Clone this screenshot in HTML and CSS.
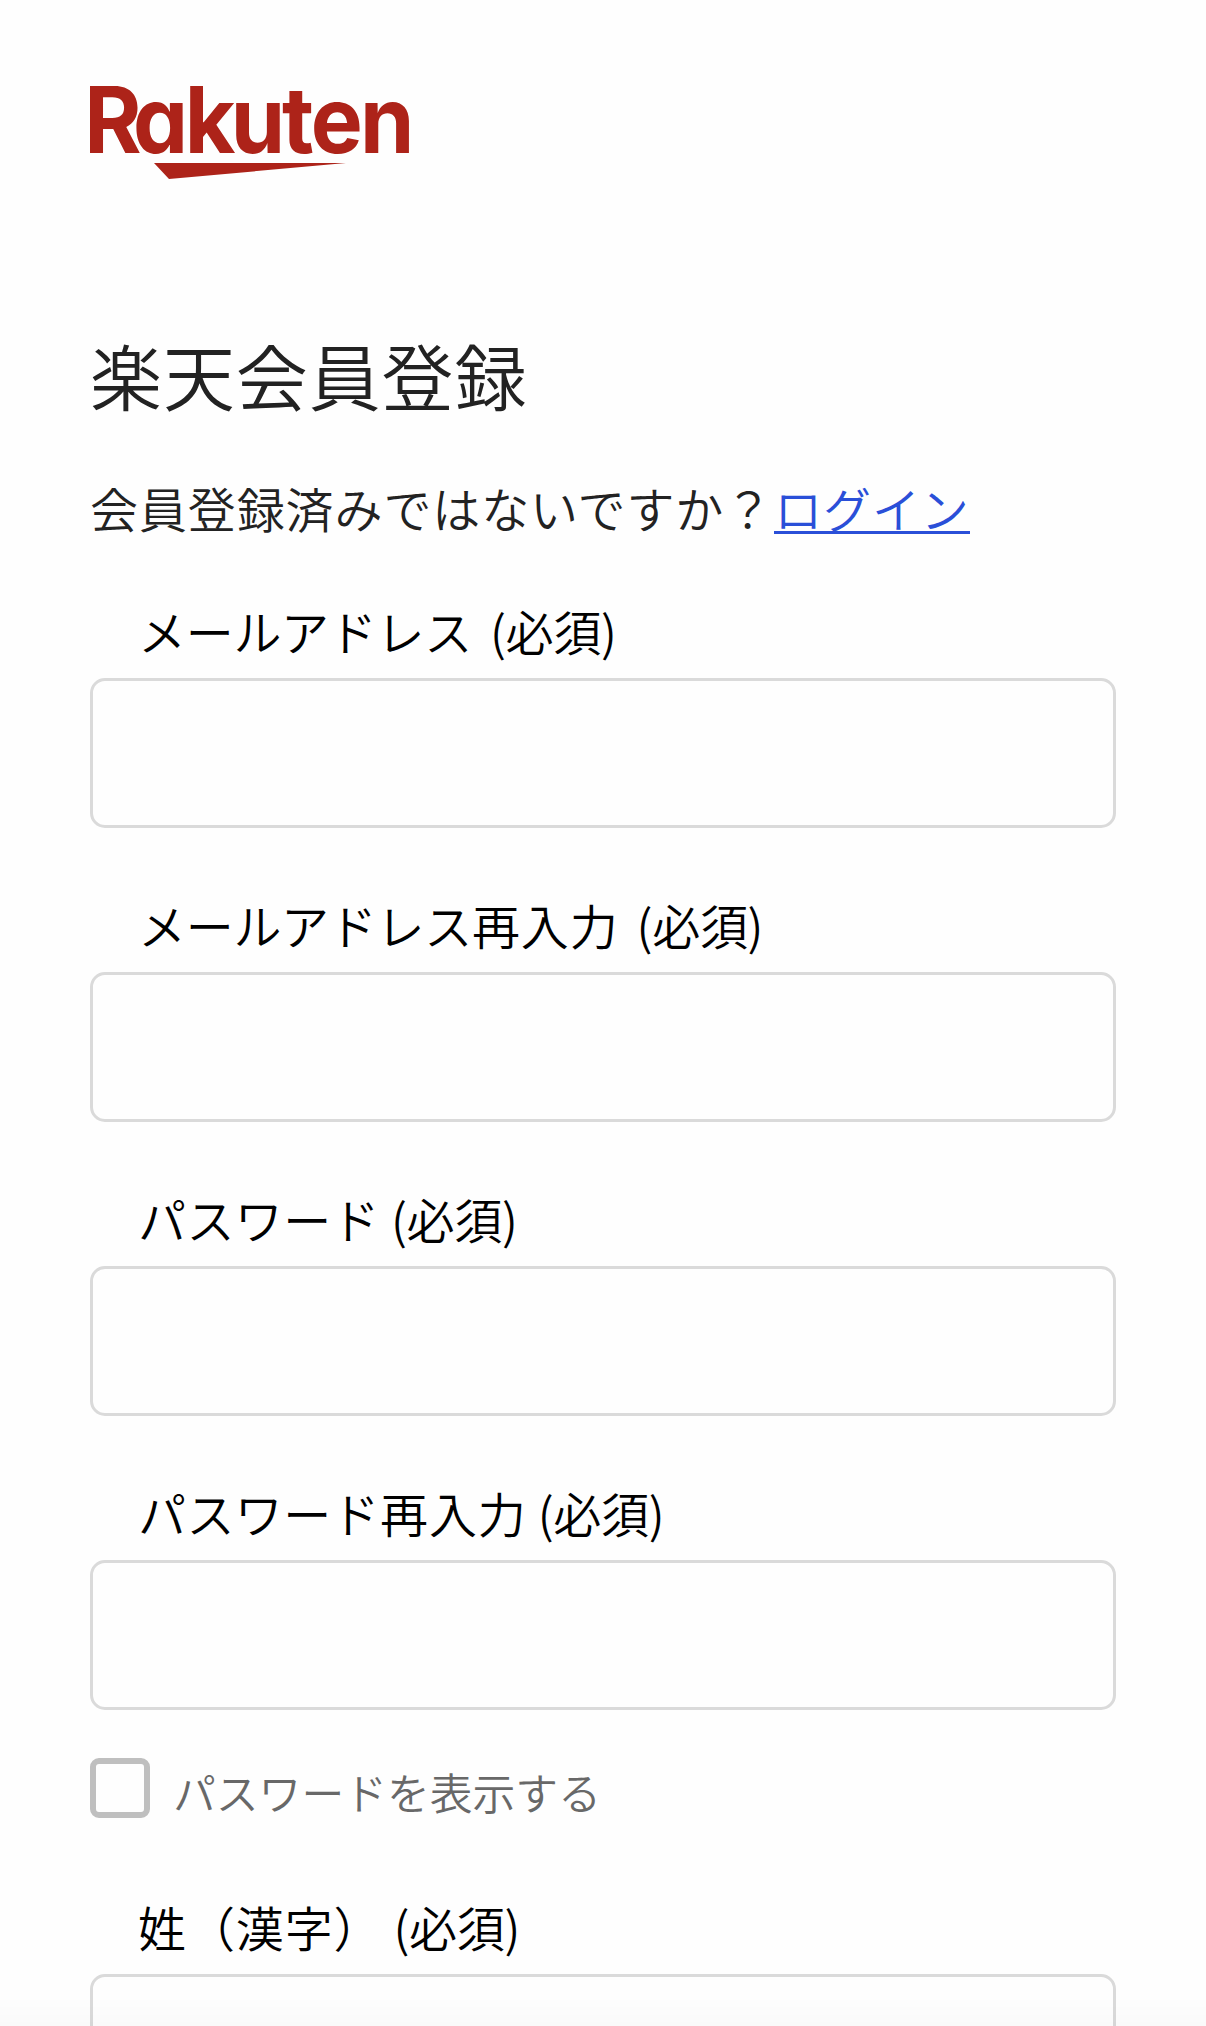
FILE: index.html
```
<!DOCTYPE html>
<html lang="ja">
<head>
    <meta charset="UTF-8">
    <meta name="viewport" content="width=device-width, initial-scale=1.0">
    <title>楽天会員登録</title>
    <link rel="stylesheet" href="styles.css">
</head>
<body>

    <div class="page">
        <svg class="logo" viewBox="0 0 320 100" role="img" aria-label="Rakuten">
            <text class="logo-text" transform="scale(0.95 1)" x="-6 45.3 99.8 148.2 202 232.4 284.2" y="73">Rakuten</text>
            <polygon points="64,83 256,83 79,99"/>
        </svg>

        <h1 class="title">楽天会員登録</h1>
        <p class="lead">会員登録済みではないですか？<a class="login" href="#">ログイン</a></p>

        <form class="form">
            <div class="field">
                <label class="label" for="email"><span class="name email">メールアドレス</span><span class="required wide">(必須)</span></label>
                <input class="input" type="email" id="email">
            </div>
            <div class="field">
                <label class="label" for="email2"><span class="name email">メールアドレス</span><span class="name">再入力</span><span class="required wide">(必須)</span></label>
                <input class="input" type="email" id="email2">
            </div>
            <div class="field">
                <label class="label" for="password"><span class="name password">パスワード</span><span class="required">(必須)</span></label>
                <input class="input" type="password" id="password">
            </div>
            <div class="field">
                <label class="label" for="password2"><span class="name password">パスワード</span><span class="name">再入力</span><span class="required">(必須)</span></label>
                <input class="input" type="password" id="password2">
            </div>
            <label class="show-password">
                <input class="checkbox" type="checkbox">
                <span class="show-text">パスワードを表示する</span>
            </label>
            <div class="field">
                <label class="label" for="lastname"><span class="name">姓（漢字）</span><span class="required">(必須)</span></label>
                <input class="input" type="text" id="lastname">
            </div>
        </form>
    </div>
    <div class="shade"></div>

</body>
</html>
```

FILE: styles.css
```
* {
    box-sizing: border-box;
}
html {
    overflow: hidden;
}
body {
    font-family: "Noto Sans CJK JP", sans-serif;
    font-weight: 350;
    height: 2026px;
    margin: 0;
    overflow: hidden;
    background-color: #fefefe;
    color: #222;
}
.page {
    height: 2026px;
    padding: 80px 90px 0;
    overflow: hidden;
}
.logo {
    display: block;
    width: 320px;
    height: 100px;
    fill: #ad2319;
    overflow: visible;
}
.logo-text {
    font-family: Inter, sans-serif;
    font-size: 92px;
    font-weight: 700;
    font-feature-settings: "cv11";
}
.title {
    margin: 144px 0 0;
    font-size: 72px;
    font-weight: 350;
    line-height: 100px;
    letter-spacing: 0.9px;
}
.lead {
    margin: 47px 0 0;
    font-size: 48px;
    line-height: 72px;
    letter-spacing: 0.9px;
    white-space: nowrap;
}
.login {
    display: inline-block;
    height: 63px;
    margin-left: 1px;
    line-height: 72px;
    color: #2a4fd8;
    text-decoration: none;
    border-bottom: 3px solid #2a4fd8;
}
.form {
    padding-top: 57px;
}
.field {
    margin-bottom: 66px;
}
.label {
    display: flex;
    align-items: center;
    height: 78px;
    padding: 0 0 18px 48px;
    font-size: 48px;
    letter-spacing: 0.9px;
    color: #000;
}
.email {
    letter-spacing: -0.3px;
}
.password {
    letter-spacing: 0.4px;
}
.required {
    margin-left: 11px;
    letter-spacing: -0.3px;
}
.required.wide {
    margin-left: 18px;
}
.input {
    display: block;
    width: 100%;
    height: 150px;
    padding: 0 40px;
    font-size: 48px;
    background-color: transparent;
    border: 3px solid #dadada;
    border-radius: 15px;
    outline: none;
}
.show-password {
    display: flex;
    align-items: center;
    height: 60px;
    margin: -18px 0 78px;
    font-size: 42.8px;
    color: #686868;
}
.show-text {
    padding-top: 5px;
}
.checkbox {
    appearance: none;
    width: 60px;
    height: 60px;
    margin: 0 23px 0 0;
    border: 6px solid #bfbfbf;
    border-radius: 9px;
}
/* soft shade along the bottom edge */
.shade {
    position: fixed;
    left: 0;
    right: 0;
    bottom: 0;
    height: 30px;
    background: linear-gradient(rgba(0, 0, 0, 0), rgba(0, 0, 0, 0.015));
    pointer-events: none;
}
```
